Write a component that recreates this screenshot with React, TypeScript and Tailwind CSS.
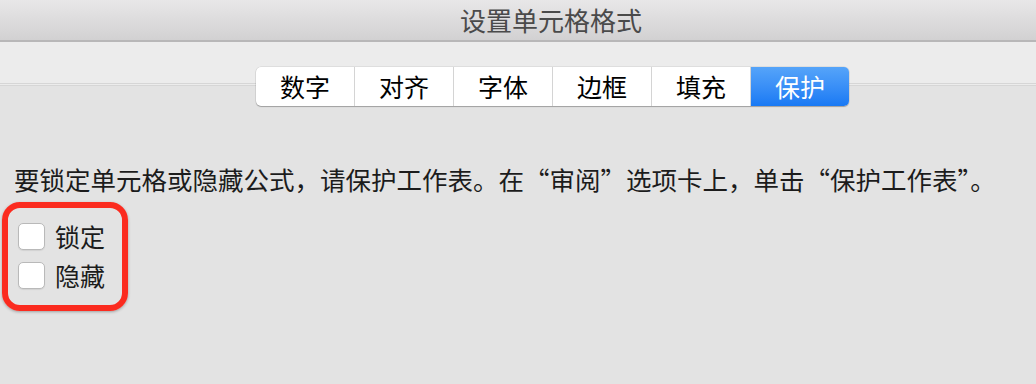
import { useState } from "react";

const TABS = ["数字", "对齐", "字体", "边框", "填充", "保护"];

function Check({ label }: { label: string }) {
  const [on, setOn] = useState(false);
  return (
    <label className="flex items-center h-[39px] cursor-default" onClick={() => setOn(!on)}>
      <span className="w-[27px] h-[27px] rounded-[5px] bg-white border border-[#b9b9b9] shadow-[0_1px_1px_rgba(0,0,0,0.08)] flex items-center justify-center text-[18px] leading-none text-[#1a7ef5]">
        {on ? "✓" : ""}
      </span>
      <span className="ml-[10px] text-[25px] leading-none text-[#1c1c1c]">{label}</span>
    </label>
  );
}

export default function App() {
  const [active, setActive] = useState(5);

  return (
    <div className="w-[1036px] h-[384px] overflow-hidden bg-[#e3e3e3] flex flex-col font-['Noto_Sans_CJK_SC',sans-serif]">
      {/* title bar */}
      <div className="h-[42px] flex-shrink-0 flex items-center justify-center bg-gradient-to-b from-[#e8e7e8] to-[#d2d1d2] border-b-2 border-[#b8b7b8]">
        <span className="text-[26px] text-[#4a4a4a] leading-none pl-[66px]">设置单元格格式</span>
      </div>

      {/* toolbar with segmented tabs */}
      <div className="h-[44px] flex-shrink-0 bg-[#ececec] border-b-[3px] border-double border-[#d6d6d6] pl-[256px] pt-[25px] relative z-10">
        <div className="flex w-[593px] h-[39px] rounded-[5px] bg-white shadow-[0_1px_1px_rgba(0,0,0,0.25),0_0_0_0.5px_rgba(0,0,0,0.12)] overflow-hidden">
          {TABS.map((t, i) => (
            <button
              key={t}
              onClick={() => setActive(i)}
              className={`flex-1 flex items-center justify-center text-[25px] leading-none ${
                i > 0 ? "border-l border-[#d4d4d4]" : ""
              } ${i === active ? "bg-gradient-to-b from-[#55a4f9] to-[#1879f4] text-white border-[#1879f4]" : "text-black"}`}
            >
              {t}
            </button>
          ))}
        </div>
      </div>

      {/* body */}
      <div className="flex-1 flex flex-col pt-[80px]">
        <p className="pl-[14px] text-[25.5px] leading-none text-[#1c1c1c] whitespace-nowrap">
          要锁定单元格或隐藏公式，请保护工作表。在“审阅”选项卡上，单击“保护工作表”。
        </p>
        <div className="ml-[2px] mt-[10px] w-[126px] h-[109px] rounded-[18px] border-[6px] border-[#fb2b1f] shadow-[0_1px_3px_rgba(0,0,0,0.3)] pl-[10px] pt-[9px]">
          <Check label="锁定" />
          <Check label="隐藏" />
        </div>
      </div>
    </div>
  );
}
